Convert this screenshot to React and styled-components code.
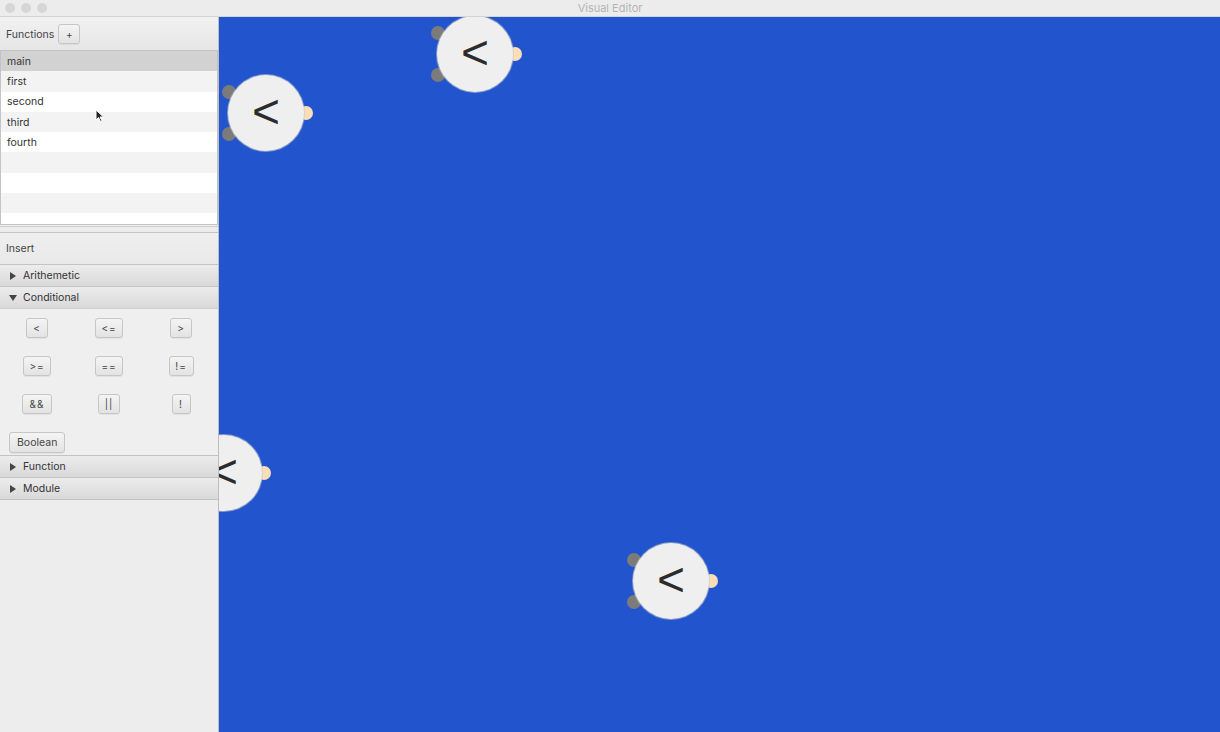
import React from "react";
import styled, { createGlobalStyle } from "styled-components";

const GlobalStyle = createGlobalStyle`
  html, body {
    margin: 0;
    padding: 0;
    background: #ececec;
  }
  body {
    font-family: Inter, "Open Sans", "Liberation Sans", sans-serif;
    -webkit-font-smoothing: antialiased;
  }
`;

const Window = styled.div`
  width: 1220px;
  height: 732px;
  display: flex;
  flex-direction: column;
  overflow: hidden;
`;

const TitleBar = styled.div`
  position: relative;
  height: 16px;
  flex: none;
  display: flex;
  align-items: center;
  justify-content: center;
  background: #ececec;
  border-bottom: 1px solid #d3d3d3;
  color: #b4b4b4;
  font-size: 11px;
`;

const Lights = styled.div`
  position: absolute;
  left: 5px;
  top: 3px;
  display: flex;
  gap: 6px;
`;

const Light = styled.span`
  width: 10px;
  height: 10px;
  border-radius: 50%;
  background: #d6d6d6;
`;

const Main = styled.div`
  flex: 1;
  display: flex;
  min-height: 0;
`;

const Sidebar = styled.div`
  width: 218px;
  flex: none;
  display: flex;
  flex-direction: column;
  background: #ededed;
  border-right: 1px solid #bdbdbd;
  font-size: 10.5px;
  color: #333;
`;

const FunctionsHeader = styled.div`
  height: 33px;
  display: flex;
  align-items: center;
  gap: 4px;
  padding-left: 6px;
  padding-top: 1px;
  box-sizing: border-box;
  background: linear-gradient(#f1f1f1, #e6e6e6);
  color: #444;
`;

const Button = styled.button`
  font-family: inherit;
  font-size: ${(p) => p.size || "10px"};
  color: #444;
  height: ${(p) => p.h || "20px"};
  min-width: ${(p) => p.w || "22px"};
  padding: 0 ${(p) => p.pad || "4px"};
  border: 1px solid #c6c6c6;
  border-radius: 3px;
  background: linear-gradient(#f4f4f4, #e3e3e3);
  box-shadow: 0 1px 0 rgba(0, 0, 0, 0.05);
  display: inline-flex;
  align-items: center;
  justify-content: center;
  letter-spacing: ${(p) => p.spacing || "0"};
`;

const List = styled.div`
  position: relative;
  height: 173px;
  border: 1px solid #c4c4c4;
  background: #fff;
  overflow: hidden;
`;

const Row = styled.div`
  height: 20.3px;
  display: flex;
  align-items: center;
  padding-left: 6px;
  color: #333;
  background: ${(p) =>
    p.selected ? "#d2d2d2" : p.odd ? "#f3f3f3" : "#ffffff"};
`;

const Cursor = styled.svg`
  position: absolute;
  left: 94px;
  top: 58px;
`;

const Divider = styled.div`
  height: 5px;
  border-top: 1px solid #cfcfcf;
  border-bottom: 1px solid #c4c4c4;
  background: #ececec;
  margin-top: 1px;
`;

const InsertLabel = styled.div`
  height: 31px;
  display: flex;
  align-items: center;
  padding-left: 6px;
  color: #444;
  background: linear-gradient(#efefef, #e9e9e9);
`;

const PaneTitle = styled.div`
  height: 21px;
  display: flex;
  align-items: center;
  gap: 6px;
  padding-left: 9px;
  border-top: 1px solid #c3c3c3;
  border-bottom: ${(p) => (p.last ? "1px solid #c3c3c3" : "none")};
  background: linear-gradient(#ececec, #d9d9d9);
  color: #333;
`;

const Arrow = styled.span`
  width: 0;
  height: 0;
  ${(p) =>
    p.open
      ? `border-left: 4px solid transparent;
         border-right: 4px solid transparent;
         border-top: 6px solid #444;`
      : `border-top: 4px solid transparent;
         border-bottom: 4px solid transparent;
         border-left: 6px solid #444;
         margin-left: 1px;
         margin-right: 1px;`}
`;

const PaneContent = styled.div`
  border-top: 1px solid #d0d0d0;
  padding: 9px 1px 2px 1px;
  background: #efefef;
`;

const OpGrid = styled.div`
  display: grid;
  grid-template-columns: repeat(3, 72px);
  row-gap: 18px;
  justify-items: center;
`;

const BoolRow = styled.div`
  margin-top: 18px;
  padding-left: 8px;
`;

const Canvas = styled.div`
  position: relative;
  flex: 1;
  background: #2255cd;
  overflow: hidden;
`;

const Node = styled.div`
  position: absolute;
  width: 76px;
  height: 76px;
  margin-left: -38px;
  margin-top: -38px;
`;

const Port = styled.span`
  position: absolute;
  width: 14px;
  height: 14px;
  border-radius: 50%;
  background: ${(p) => (p.out ? "#f8dfb8" : "#7b7b7b")};
`;

const Disc = styled.div`
  position: absolute;
  inset: 0;
  border-radius: 50%;
  background: #efefef;
  box-shadow: 0 0 0 1px rgba(200, 200, 200, 0.6);
  display: flex;
  align-items: center;
  justify-content: center;
  font-family: "Liberation Sans", Arial, sans-serif;
  font-size: 48px;
  color: #2c2c2c;
  line-height: 1;
  padding-bottom: 3px;
  box-sizing: border-box;
`;

const functions = ["main", "first", "second", "third", "fourth", "", "", "", ""];

const ops = [
  { label: "<", w: "22px" },
  { label: "<=", w: "28px" },
  { label: ">", w: "22px" },
  { label: ">=", w: "28px" },
  { label: "==", w: "28px" },
  { label: "!=", w: "25px" },
  { label: "&&", w: "30px" },
  { label: "||", w: "22px" },
  { label: "!", w: "19px" },
];

const nodes = [
  { x: 256, y: 37 },
  { x: 47, y: 96 },
  { x: 5, y: 456 },
  { x: 452, y: 564 },
];

const GraphNode = ({ x, y }) => (
  <Node style={{ left: x, top: y }}>
    <Port style={{ left: -6, top: 10 }} />
    <Port style={{ left: -6, top: 52 }} />
    <Port out style={{ left: 71, top: 31 }} />
    <Disc>&lt;</Disc>
  </Node>
);

export default function App() {
  return (
    <Window>
      <GlobalStyle />
      <TitleBar>
        <Lights>
          <Light />
          <Light />
          <Light />
        </Lights>
        Visual Editor
      </TitleBar>
      <Main>
        <Sidebar>
          <FunctionsHeader>
            Functions
            <Button>+</Button>
          </FunctionsHeader>
          <List>
            {functions.map((name, i) => (
              <Row key={i} selected={i === 0} odd={i % 2 === 1}>
                {name}
              </Row>
            ))}
            <Cursor width="10" height="14" viewBox="0 0 10 14">
              <path
                d="M1 1 L1 11 L3.5 8.5 L5.5 12.5 L7 11.8 L5 8 L8.5 8 Z"
                fill="#222"
                stroke="#fff"
                strokeWidth="1"
              />
            </Cursor>
          </List>
          <Divider />
          <InsertLabel>Insert</InsertLabel>
          <PaneTitle>
            <Arrow />
            Arithemetic
          </PaneTitle>
          <PaneTitle>
            <Arrow open />
            Conditional
          </PaneTitle>
          <PaneContent>
            <OpGrid>
              {ops.map((op) => (
                <Button key={op.label} w={op.w} spacing="1px">
                  {op.label}
                </Button>
              ))}
            </OpGrid>
            <BoolRow>
              <Button size="10.5px" h="21px" pad="7px">
                Boolean
              </Button>
            </BoolRow>
          </PaneContent>
          <PaneTitle>
            <Arrow />
            Function
          </PaneTitle>
          <PaneTitle last>
            <Arrow />
            Module
          </PaneTitle>
        </Sidebar>
        <Canvas>
          {nodes.map((n, i) => (
            <GraphNode key={i} x={n.x} y={n.y} />
          ))}
        </Canvas>
      </Main>
    </Window>
  );
}
